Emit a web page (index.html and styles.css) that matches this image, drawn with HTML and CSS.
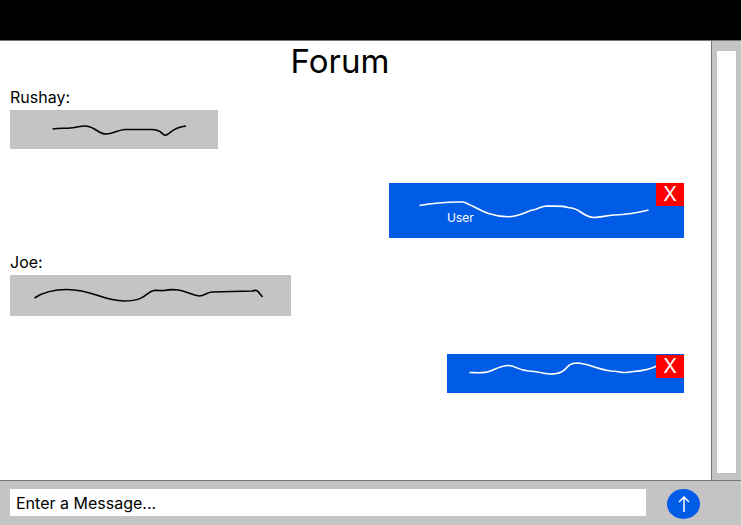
FILE: index.html
```html
<!DOCTYPE html>
<html lang="en">
<head>
<meta charset="utf-8">
<meta name="viewport" content="width=device-width, initial-scale=1">
<title>Forum</title>
<link rel="stylesheet" href="styles.css">
</head>
<body>
<div class="app">
  <header class="topbar"></header>
  <div class="middle">
    <main class="forum">
      <h1 class="title">Forum</h1>
      <article class="message">
        <h2 class="author">Rushay:</h2>
        <div class="bubble bubble-first">
          <svg class="scribble" viewBox="0 0 208 39" aria-hidden="true"><path d="M42.500 19C49 18 54 18.500 60 18C66 17.500 71 15.700 76 16C86 17 88 24 96 24C103 24 108 19.800 115 19.500H140C153 19 151 25 155.500 25.300C160 24 163 17 176 16"/></svg>
        </div>
      </article>
      <article class="message own">
        <div class="bubble bubble-second">
          <svg class="scribble" viewBox="0 0 295 55" aria-hidden="true"><path d="M30.500 22.500Q52 18.500 74.500 19C87 23.500 97 33.500 119 33.700C131 33.700 137 28 146 26.500C151 25 153 23 158 23C165 23.500 173 22.500 179 24.500Q187 25.500 190 28C195 31.500 200 34.500 205 34.500C211 34.500 217 32.500 225 32C241 31.500 248 30 259.500 27"/></svg>
          <span class="user">User</span>
          <button class="remove" type="button" aria-label="Delete message">X</button>
        </div>
      </article>
      <article class="message">
        <h2 class="author">Joe:</h2>
        <div class="bubble bubble-third">
          <svg class="scribble" viewBox="0 0 281 41" aria-hidden="true"><path d="M24.500 23C35 16 46 14.500 57 14.500C83 14.500 92 26 114 26C137 26 136 16.500 144 15.500C148 15 151 16 154 15.500C171 12 178 19.500 189 21C195 21 196 17.500 202 17L242 16Q247 14.500 248 16.500L252.500 22"/></svg>
        </div>
      </article>
      <article class="message own">
        <div class="bubble bubble-fourth">
          <svg class="scribble" viewBox="0 0 237 39" aria-hidden="true"><path d="M22.500 18.500C29 18.500 37 19.500 42 17.500C48 15.500 54 11.500 61 11.500C69 11.500 71 16.500 82 17C92 17 94 20 103 20C123 20 116 9.500 130 9C140 9 151 15.500 164 17C172 17 174 19 180 18.500C185 17 200 18 210.500 11.500"/></svg>
          <button class="remove remove-inset" type="button" aria-label="Delete message">X</button>
        </div>
      </article>
    </main>
    <aside class="scrollbar"><div class="thumb"></div></aside>
  </div>
  <form class="composer">
    <input class="entry" type="text" aria-label="Message" placeholder="Enter a Message...">
    <button class="send" type="button" aria-label="Send">
      <svg class="arrow" viewBox="0 0 14 18" aria-hidden="true"><path d="M7 17V2M2 7L7 2L12 7"/></svg>
    </button>
  </form>
</div>
</body>
</html>
```

FILE: styles.css
```css
* {
  box-sizing: border-box;
}

body {
  margin: 0;
  background: #fff;
  color: #000;
  font-family: Inter, "Liberation Sans", sans-serif;
}

.app {
  display: flex;
  flex-direction: column;
  min-height: 100vh;
  border-right: 1px solid #e5e0dc;
}

.topbar {
  height: 40px;
  background: #000;
}

.middle {
  display: flex;
  flex: 1;
  border-top: 1px solid #777;
}

.forum {
  flex: 1;
  padding: 0 27px 0 10px;
}

.title {
  margin: 0 0 6px;
  padding-right: 14px;
  font-size: 33px;
  font-weight: 400;
  line-height: 40px;
  text-align: center;
}

.author {
  margin: 0;
  padding-bottom: 3px;
  font-size: 16px;
  font-weight: 400;
  line-height: 20px;
}

.own {
  display: flex;
  justify-content: flex-end;
  padding: 34px 0 14px;
}

.bubble {
  position: relative;
  max-width: 100%;
  background: #c4c4c4;
  color: #000;
}

.own .bubble {
  background: #005ce6;
  color: #fff;
}

.bubble-first {
  width: 208px;
}

.bubble-second {
  width: 295px;
}

.bubble-third {
  width: 281px;
}

.bubble-fourth {
  width: 237px;
  margin-top: 4px;
}

.scribble {
  display: block;
  width: 100%;
  fill: none;
  stroke: currentColor;
  stroke-width: 1.6;
}

.user {
  position: absolute;
  top: 27px;
  left: 58px;
  font-size: 12px;
  line-height: 16px;
}

.remove {
  position: absolute;
  top: 0;
  right: 0;
  width: 28px;
  height: 23px;
  padding: 0;
  border: 0;
  background: #f00;
  color: #fff;
  font-family: inherit;
  font-size: 20px;
  line-height: 23px;
}

.remove-inset {
  top: 1px;
}

.scrollbar {
  display: flex;
  width: 30px;
  padding: 10px 5px 7px;
  border-left: 1px solid #777;
  background: #c4c4c4;
}

.thumb {
  flex: 1;
  background: #fff;
}

.composer {
  display: flex;
  align-items: flex-start;
  gap: 21px;
  height: 45px;
  padding: 8px 41px 0 10px;
  border-top: 1px solid #777;
  background: #c4c4c4;
}

.entry {
  flex: 1;
  min-width: 0;
  height: 27px;
  padding: 0 6px;
  border: 0;
  background: #fff;
  color: #000;
  font-family: inherit;
  font-size: 16px;
}

.entry::placeholder {
  color: #000;
  opacity: 1;
}

.send {
  display: flex;
  align-items: center;
  justify-content: center;
  width: 33px;
  height: 30px;
  padding: 0;
  border: 0;
  border-radius: 50%;
  background: #005ce6;
  color: #fff;
}

.arrow {
  width: 14px;
  height: 18px;
  fill: none;
  stroke: currentColor;
  stroke-width: 1.5;
}
```
